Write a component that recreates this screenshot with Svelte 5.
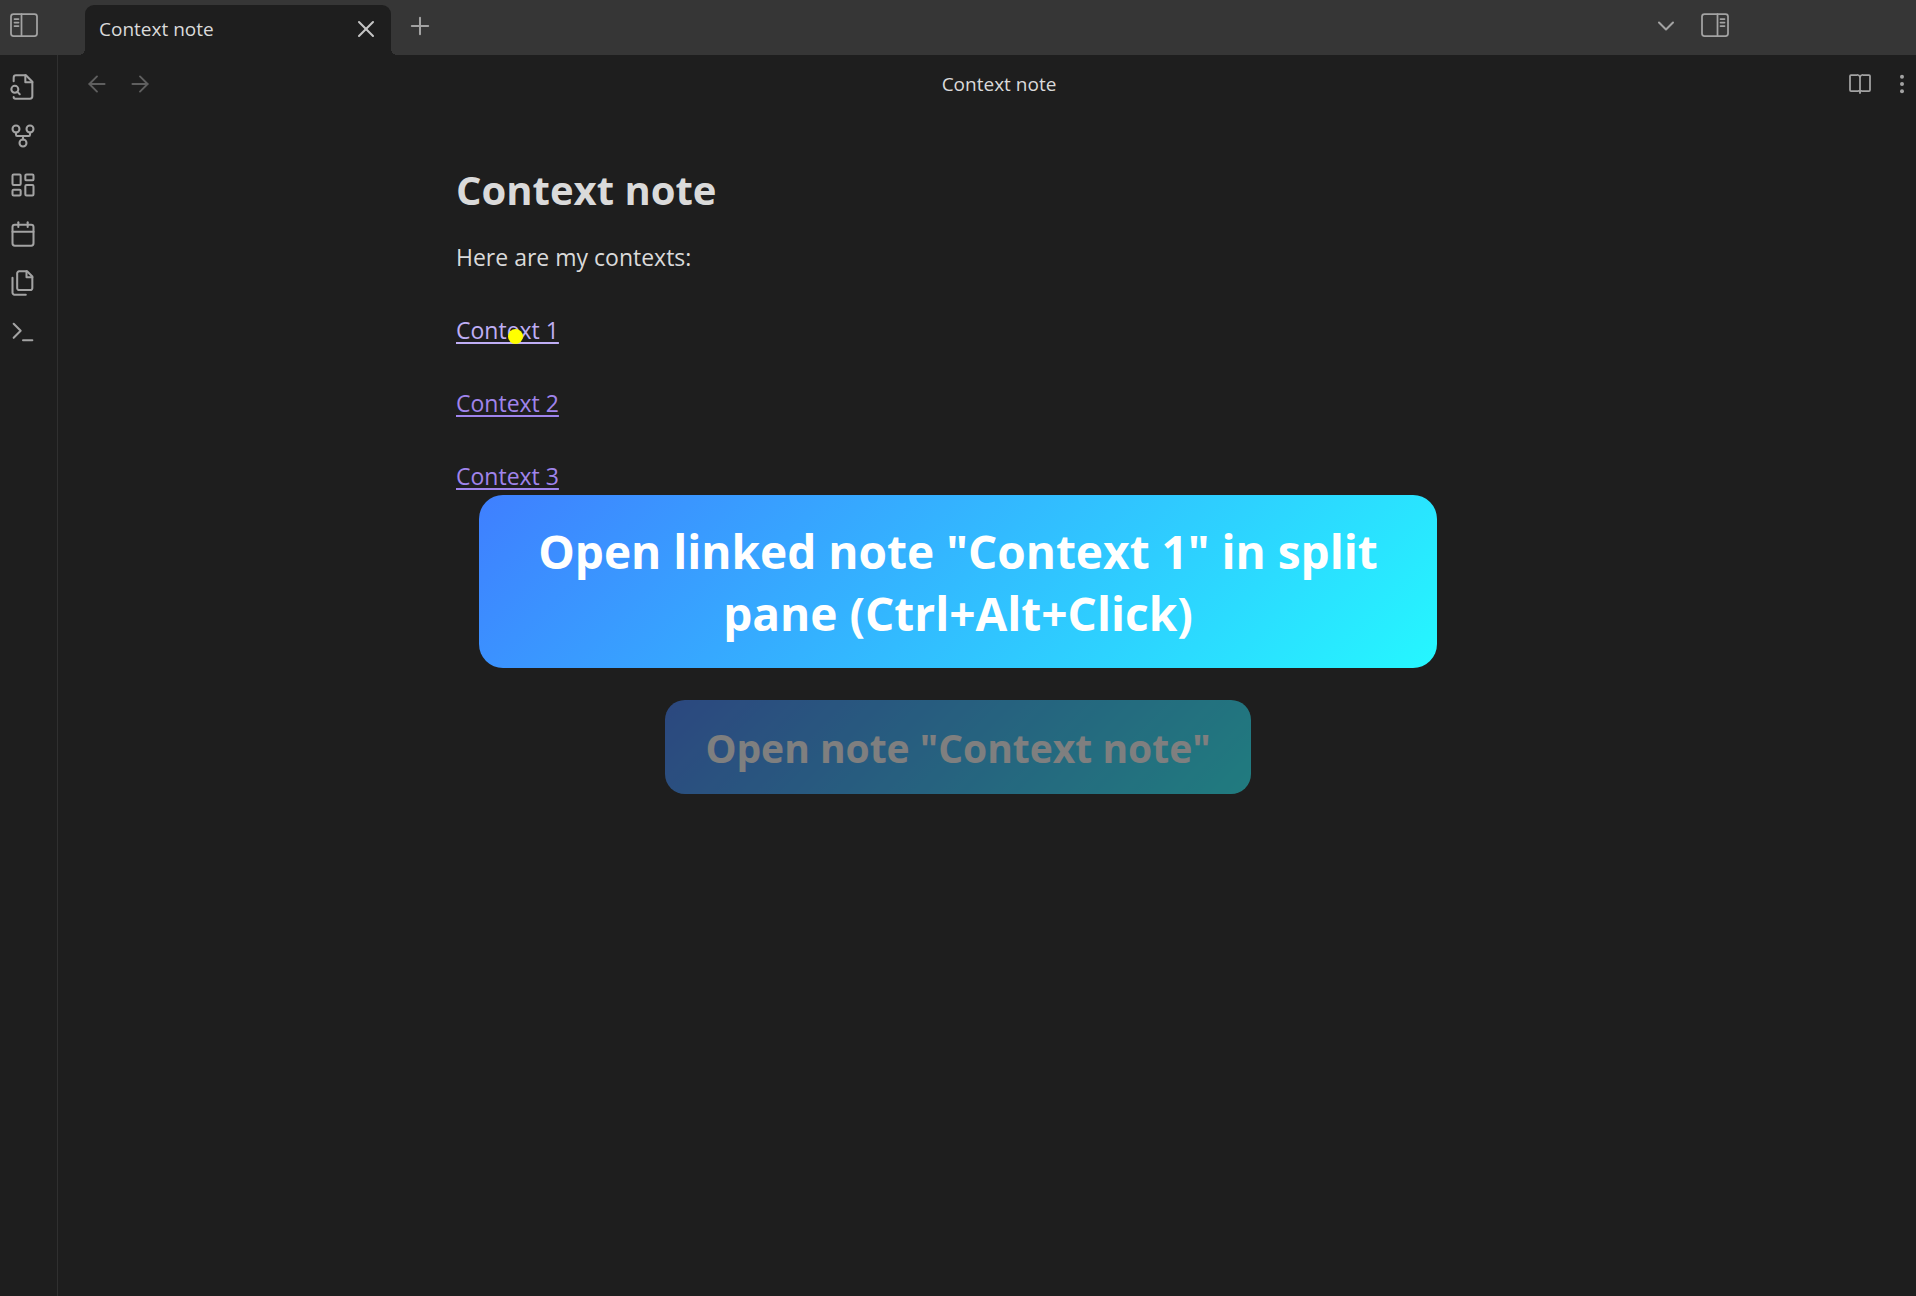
<script>
  const ribbon = [
    {
      label: 'Open quick switcher',
      paths: [
        'M4 7V4a2 2 0 0 1 2-2h8.5L20 7.5V20a2 2 0 0 1-2 2H5.500a1.500 1.500 0 0 1-1.500-1.500',
        'M14 2v6h6',
        'M2 14a3 3 0 1 0 6 0a3 3 0 1 0-6 0',
        'M9.200 18.200l-2-2'
      ]
    },
    {
      label: 'Open graph view',
      paths: [
        'M9 18a3 3 0 1 0 6 0a3 3 0 1 0-6 0',
        'M3 6a3 3 0 1 0 6 0a3 3 0 1 0-6 0',
        'M15 6a3 3 0 1 0 6 0a3 3 0 1 0-6 0',
        'M18 9v2c0 .6-.4 1-1 1H7c-.6 0-1-.4-1-1V9',
        'M12 12v3'
      ]
    },
    {
      label: 'Create new canvas',
      paths: [
        'M4 3h5a1 1 0 0 1 1 1v7a1 1 0 0 1-1 1H4a1 1 0 0 1-1-1V4a1 1 0 0 1 1-1z',
        'M15 3h5a1 1 0 0 1 1 1v3a1 1 0 0 1-1 1h-5a1 1 0 0 1-1-1V4a1 1 0 0 1 1-1z',
        'M15 12h5a1 1 0 0 1 1 1v7a1 1 0 0 1-1 1h-5a1 1 0 0 1-1-1v-7a1 1 0 0 1 1-1z',
        'M4 16h5a1 1 0 0 1 1 1v3a1 1 0 0 1-1 1H4a1 1 0 0 1-1-1v-3a1 1 0 0 1 1-1z'
      ]
    },
    {
      label: "Open today's daily note",
      paths: [
        'M5 4h14a2 2 0 0 1 2 2v14a2 2 0 0 1-2 2H5a2 2 0 0 1-2-2V6a2 2 0 0 1 2-2z',
        'M16 2v4',
        'M8 2v4',
        'M3 10h18'
      ]
    },
    {
      label: 'Insert template',
      paths: [
        'M15.500 2H8.600c-.4 0-.8.2-1.100.5-.3.3-.5.7-.5 1.100v12.800c0 .4.2.8.5 1.100.3.3.7.5 1.100.5h9.800c.4 0 .8-.2 1.100-.5.3-.3.5-.7.5-1.100V6.500L15.500 2z',
        'M3 7.600v12.800c0 .4.2.8.5 1.100.3.3.7.5 1.100.5h9.800',
        'M15 2v5h5'
      ]
    },
    { label: 'Open command palette', paths: ['M4 17l6-6-6-6', 'M12 19h8'] }
  ];

  const links = ['Context 1', 'Context 2', 'Context 3'];
</script>

{#snippet icon(paths)}
  <svg viewBox="0 0 24 24" aria-hidden="true">
    {#each paths as d}<path {d} />{/each}
  </svg>
{/snippet}

<div class="app">
  <header class="titlebar">
    <button class="toggle" aria-label="Toggle left sidebar">
      <svg viewBox="0 0 28 24" aria-hidden="true">
        <rect x="1" y="1" width="26" height="22" rx="2.500" />
        <path d="M11.500 1v22M4.500 6h4M4.500 9.500h4M4.500 13h4" />
      </svg>
    </button>
    <div class="tab">
      <span>Context note</span>
      <button class="close" aria-label="Close tab">{@render icon(['M18 6L6 18', 'M6 6l12 12'])}</button>
    </div>
    <button class="new" aria-label="New tab">{@render icon(['M12 5v14', 'M5 12h14'])}</button>
    <div class="window-tools">
      <button class="chevron" aria-label="Tab list">{@render icon(['M6 9l6 6 6-6'])}</button>
      <button class="toggle" aria-label="Toggle right sidebar">
        <svg viewBox="0 0 28 24" aria-hidden="true">
          <rect x="1" y="1" width="26" height="22" rx="2.500" />
          <path d="M16.500 1v22M19.500 6h4M19.500 9.500h4M19.500 13h4" />
        </svg>
      </button>
    </div>
  </header>

  <div class="body">
    <nav class="ribbon" aria-label="Ribbon">
      {#each ribbon as item}
        <button aria-label={item.label}>{@render icon(item.paths)}</button>
      {/each}
    </nav>

    <main>
      <div class="view-header">
        <div class="history">
          <button aria-label="Back">{@render icon(['M19 12H5', 'M12 19l-7-7 7-7'])}</button>
          <button aria-label="Forward">{@render icon(['M5 12h14', 'M12 5l7 7-7 7'])}</button>
        </div>
        <div class="view-title">Context note</div>
        <div class="actions">
          <button aria-label="Reading view">
            {@render icon([
              'M12 5v16',
              'M3 19a1 1 0 0 1-1-1V4a1 1 0 0 1 1-1h6a3 3 0 0 1 3 2A3 3 0 0 1 15 3h6a1 1 0 0 1 1 1v14a1 1 0 0 1-1 1h-7a2 2 0 0 0-2 1A2 2 0 0 0 10 19z'
            ])}
          </button>
          <button class="more" aria-label="More options">
            <svg viewBox="0 0 24 24" aria-hidden="true">
              <circle cx="12" cy="4.800" r="2" />
              <circle cx="12" cy="12" r="2" />
              <circle cx="12" cy="19.200" r="2" />
            </svg>
          </button>
        </div>
      </div>

      <article>
        <h1>Context note</h1>
        <p>Here are my contexts:</p>
        {#each links as link, i}
          <p>
            <a href="#{link}" class:hovered={i === 0}>{link}{#if i === 0}<span class="pointer"></span>{/if}</a>
          </p>
        {/each}
      </article>
    </main>
  </div>

  <div class="toasts" role="status">
    <div class="toast">Open linked note "Context 1" in split pane (Ctrl+Alt+Click)</div>
    <div class="toast previous">Open note "Context note"</div>
  </div>
</div>

<style>
  :global(body) {
    margin: 0;
    background: #1e1e1e;
  }

  .app {
    position: relative;
    display: flex;
    flex-direction: column;
    min-height: 100vh;
    background: #1e1e1e;
    color: #dadada;
    font-family: 'Open Sans', 'Noto Sans', sans-serif;
    font-size: 19px;
  }

  button {
    display: flex;
    flex: none;
    padding: 0;
    border: 0;
    background: none;
    color: #a3a3a3;
    cursor: pointer;
  }

  svg {
    display: block;
    width: 28px;
    height: 28px;
    fill: none;
    stroke: currentColor;
    stroke-width: 1.75;
    stroke-linecap: round;
    stroke-linejoin: round;
  }

  .titlebar {
    display: flex;
    height: 55px;
    background: #363636;
  }

  .toggle {
    align-self: flex-start;
    margin: 13px 0 0 10px;
  }

  .toggle svg {
    height: 24px;
  }

  .tab {
    position: relative;
    display: flex;
    align-items: center;
    justify-content: space-between;
    box-sizing: border-box;
    width: 306px;
    margin: 5px 0 0 47px;
    padding: 0 11px 2px 14px;
    border-radius: 9px 9px 0 0;
    background: #1e1e1e;
  }

  .tab::before,
  .tab::after {
    content: '';
    position: absolute;
    bottom: 0;
    width: 6px;
    height: 6px;
  }

  .tab::before {
    right: 100%;
    background: radial-gradient(circle at 0 0, transparent 6px, #1e1e1e 6px);
  }

  .tab::after {
    left: 100%;
    background: radial-gradient(circle at 100% 0, transparent 6px, #1e1e1e 6px);
  }

  .close {
    color: #c4c4c4;
  }

  .new {
    align-items: center;
    margin: 0 0 3px 15px;
  }

  .window-tools {
    display: flex;
    align-items: flex-start;
    margin: 0 187px 0 auto;
  }

  .chevron {
    margin-top: 12px;
  }

  .window-tools .toggle {
    margin-left: 21px;
  }

  .body {
    display: flex;
    flex: 1;
  }

  .ribbon {
    display: flex;
    flex: none;
    flex-direction: column;
    gap: 21px;
    box-sizing: border-box;
    width: 58px;
    padding: 18px 9px;
    border-right: 1px solid #303030;
  }

  main {
    flex: 1;
    min-width: 0;
  }

  .view-header {
    display: flex;
    align-items: center;
    height: 57px;
    padding: 0 2px 0 26px;
  }

  .history,
  .actions {
    display: flex;
    flex: none;
    align-items: center;
    width: 80px;
  }

  .history {
    gap: 17px;
  }

  .history svg {
    width: 26px;
    height: 26px;
  }

  .history button {
    color: #5f5f5f;
  }

  .view-title {
    flex: 1;
    text-align: center;
  }

  .actions {
    justify-content: flex-end;
    gap: 18px;
  }

  .actions svg {
    width: 24px;
    height: 24px;
  }

  .actions .more svg {
    fill: currentColor;
    stroke: none;
  }

  article {
    max-width: 1062px;
    margin: 0 auto;
    padding-top: 50px;
    font-size: 23px;
    line-height: 37px;
  }

  h1 {
    margin: 0 0 21px;
    font-size: 40px;
    font-weight: 700;
    line-height: 56px;
  }

  p {
    margin: 0 0 36px;
  }

  a {
    position: relative;
    color: #a084ec;
    text-decoration: underline;
    text-decoration-thickness: 2px;
    text-underline-offset: 3px;
    text-decoration-skip-ink: none;
  }

  a.hovered {
    color: #bfaef5;
  }

  .pointer {
    position: absolute;
    top: 15px;
    left: 52px;
    width: 15px;
    height: 15px;
    border-radius: 50%;
    background: #ffff00;
  }

  .toasts {
    position: absolute;
    top: 495px;
    right: 0;
    left: 0;
    display: flex;
    flex-direction: column;
    align-items: center;
    gap: 32px;
    color: #ffffff;
    font-weight: 700;
    text-align: center;
    pointer-events: none;
  }

  .toast {
    box-sizing: border-box;
    max-width: 50%;
    padding: 25px 48px 24px;
    border-radius: 24px;
    background: linear-gradient(135deg, #3f7fff, #25f7ff);
    font-size: 46px;
    line-height: 62px;
  }

  .toast.previous {
    padding: 21px 40px 19px;
    border-radius: 20px;
    font-size: 39px;
    line-height: 54px;
    opacity: 0.43;
  }
</style>
